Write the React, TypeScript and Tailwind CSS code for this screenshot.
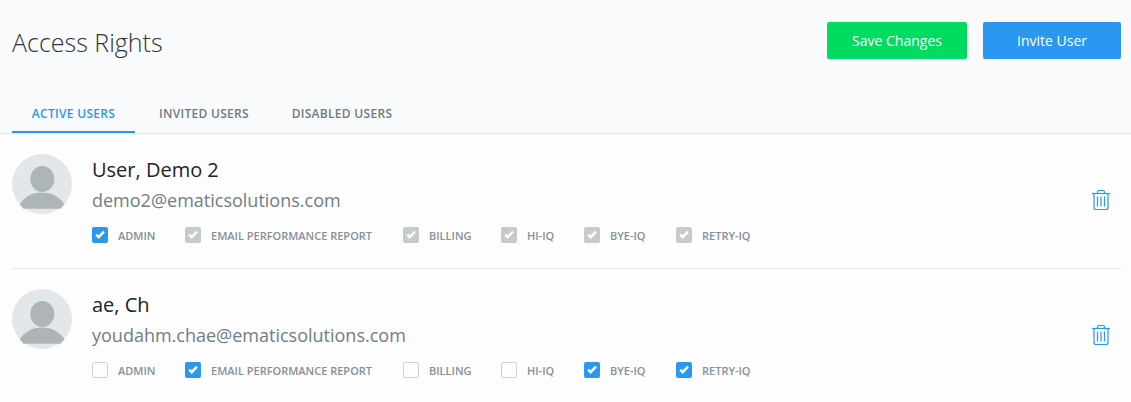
import React from "react";

type Permission = { label: string; width: string };
type Mark = "on" | "off" | "locked";
type User = { name: string; email: string; marks: Mark[] };

const permissions: Permission[] = [
  { label: "ADMIN", width: "w-[93px]" },
  { label: "EMAIL PERFORMANCE REPORT", width: "w-[218px]" },
  { label: "BILLING", width: "w-[98px]" },
  { label: "HI-IQ", width: "w-[83px]" },
  { label: "BYE-IQ", width: "w-[92px]" },
  { label: "RETRY-IQ", width: "w-[80px]" },
];

const users: User[] = [
  {
    name: "User, Demo 2",
    email: "demo2@ematicsolutions.com",
    marks: ["on", "locked", "locked", "locked", "locked", "locked"],
  },
  {
    name: "ae, Ch",
    email: "youdahm.chae@ematicsolutions.com",
    marks: ["off", "on", "off", "off", "on", "on"],
  },
];

function Avatar() {
  return (
    <svg className="h-[60px] w-[60px] shrink-0" viewBox="0 0 60 60">
      <circle cx="30" cy="30" r="30" fill="#e4e7e9" />
      <ellipse cx="30.3" cy="25" rx="12" ry="13" fill="#aeb5b8" />
      <path d="M7.800 50.500C12 43 20 38.500 30 38.500S48 43 52.500 50.500L48.500 54.700H11.500Z" fill="#aeb5b8" />
    </svg>
  );
}

function Box({ mark }: { mark: Mark }) {
  if (mark === "off") {
    return <span className="h-4 w-4 shrink-0 rounded-xs border border-[#ccd3d8] bg-[#fdfdfd]" />;
  }
  return (
    <span
      className={`flex h-4 w-4 shrink-0 rounded-xs ${mark === "on" ? "bg-[#2a97f0]" : "bg-[#c5cacd]"}`}
    >
      <svg className="h-4 w-4" viewBox="0 0 16 16" fill="none">
        <path d="M4.200 7.700L6.700 10.200L12 4.700" stroke="#fff" strokeWidth="2.400" />
      </svg>
    </span>
  );
}

function Trash() {
  return (
    <svg className="h-[22px] w-[18px]" viewBox="0 0 18 22" fill="none" stroke="#2a97f0" strokeWidth="1.200">
      <path d="M0 4.500H18" />
      <path d="M5.500 4.500V3Q5.500 1.500 7 1.500H11Q12.500 1.500 12.500 3V4.500" />
      <path d="M2 4.500V18.500Q2 20.500 4 20.500H14Q16 20.500 16 18.500V4.500" />
      <path d="M5.500 7.500V17.500M9 7.500V17.500M12.500 7.500V17.500" />
    </svg>
  );
}

function UserRow({ user }: { user: User }) {
  return (
    <section className="mr-[10px] ml-3 flex h-[135px] border-b border-[#e4e6e8] pt-5">
      <Avatar />
      <div className="ml-5 flex-1">
        <h2 className="h-8 text-[20px] leading-8 text-[#202327]">{user.name}</h2>
        <p className="h-7 text-[18px] leading-7 text-[#6f7e88]">{user.email}</p>
        <div className="mt-[13px] flex h-4 items-center">
          {permissions.map((permission, i) => (
            <label key={permission.label} className={`flex shrink-0 items-center gap-2.5 ${permission.width}`}>
              <Box mark={user.marks[i]} />
              <span className="whitespace-nowrap pt-px text-[11px] leading-4 font-semibold text-[#84919a]">
                {permission.label}
              </span>
            </label>
          ))}
        </div>
      </div>
      <button className="mt-[35px] mr-[11px] h-[22px]" aria-label="Delete user">
        <Trash />
      </button>
    </section>
  );
}

export default function App() {
  return (
    <main className="h-[402px] overflow-hidden bg-[#fdfdfd] font-['Open_Sans',sans-serif]">
      <header className="flex h-[134px] flex-col justify-between border-b border-[#e4e6e8] bg-[#f9fafb]">
        <div className="flex items-start justify-between pt-[22px] pr-[10px] pl-3">
          <h1 className="text-[25px] leading-[40px] font-light text-[#30343b]">Access Rights</h1>
          <div className="flex gap-4 text-[14px] text-white">
            <button className="h-[37px] w-[140px] rounded-xs bg-[#00dc5f]">Save Changes</button>
            <button className="h-[37px] w-[138px] rounded-xs bg-[#2a97f0]">Invite User</button>
          </div>
        </div>
        <nav className="flex h-[39px] pl-3 text-[12px] leading-[38px] font-semibold tracking-[0.3px] text-[#6f7a82]">
          <button className="w-[123px] border-b-2 border-[#2a97f0] pt-px text-[#2a97f0]">ACTIVE USERS</button>
          <button className="ml-6 w-[90px] whitespace-nowrap">INVITED USERS</button>
          <button className="ml-[42px] w-[102px] whitespace-nowrap">DISABLED USERS</button>
        </nav>
      </header>
      {users.map((user) => (
        <UserRow key={user.email} user={user} />
      ))}
    </main>
  );
}
